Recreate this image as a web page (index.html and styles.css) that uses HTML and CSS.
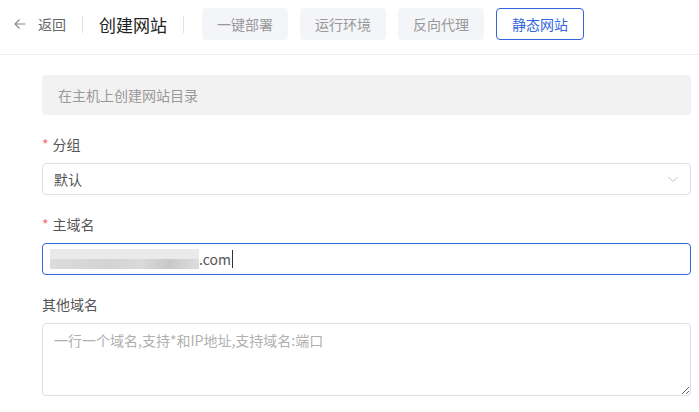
FILE: index.html
```html
<!DOCTYPE html>
<html lang="zh-CN">
<head>
    <meta charset="UTF-8">
    <title>创建网站</title>
    <link rel="stylesheet" href="styles.css">
</head>
<body>

<div class="page-header">
    <a class="back-link">
        <svg width="14" height="14" viewBox="0 0 14 14"><path d="M12.5 7H2M6.5 2.5L2 7l4.5 4.5" fill="none" stroke="#888" stroke-width="1.1"/></svg>
        <span>返回</span>
    </a>
    <span class="divider"></span>
    <h1>创建网站</h1>
    <span class="divider"></span>
    <div class="type-tabs">
        <button>一键部署</button>
        <button>运行环境</button>
        <button>反向代理</button>
        <button class="active">静态网站</button>
    </div>
</div>

<div class="form-body">
    <div class="notice">在主机上创建网站目录</div>

    <div class="form-item">
        <label class="required">分组</label>
        <div class="select-box">
            <span>默认</span>
            <svg width="12" height="12" viewBox="0 0 12 12"><path d="M1.5 4l4.5 4.5L10.5 4" fill="none" stroke="#c0c4cc" stroke-width="1"/></svg>
        </div>
    </div>

    <div class="form-item">
        <label class="required">主域名</label>
        <div class="input-box focused">
            <span class="blurred"></span><span class="domain">.com</span><span class="caret"></span>
        </div>
    </div>

    <div class="form-item">
        <label>其他域名</label>
        <textarea placeholder="一行一个域名,支持*和IP地址,支持域名:端口"></textarea>
    </div>
</div>

</body>
</html>
```

FILE: styles.css
```css
body {
    margin: 0;
    font-family: "Noto Sans CJK SC", "Liberation Sans", sans-serif;
    font-size: 14px;
    color: #333;
    background: #fff;
}

/* Header */
.page-header {
    display: flex;
    align-items: center;
    height: 48px;
    padding: 0 0 6px 13px;
    border-bottom: 1px solid #ececec;
}

.back-link {
    display: flex;
    align-items: center;
    gap: 11px;
    color: #666;
    font-size: 14px;
}

.divider {
    width: 1px;
    height: 17px;
    background: #e2e2e2;
    margin: 0 16px;
}

.page-header h1 {
    margin: 0;
    font-size: 17px;
    font-weight: normal;
    color: #222;
}

.type-tabs {
    display: flex;
    gap: 12px;
    margin-left: 2px;
}

.type-tabs button {
    width: 86px;
    height: 32px;
    border: 1px solid #f4f5f8;
    border-radius: 4px;
    background: #f4f5f8;
    color: #999;
    font-family: inherit;
    font-size: 14px;
    padding: 0;
}

.type-tabs button.active {
    width: 88px;
    background: #fff;
    border-color: #3366dd;
    color: #3366dd;
}

/* Form */
.form-body {
    padding: 20px 8px 0 42px;
}

.notice {
    height: 40px;
    line-height: 40px;
    padding: 0 16px;
    background: #f2f2f2;
    border-radius: 4px;
    color: #999;
    margin-bottom: 18px;
}

.form-item {
    margin-bottom: 18px;
}

.form-item label {
    display: block;
    line-height: 22px;
    margin-bottom: 8px;
    color: #555;
}

.form-item label.required::before {
    content: "*";
    color: #f56c6c;
    margin-right: 4px;
}

.select-box,
.input-box {
    display: flex;
    align-items: center;
    height: 32px;
    padding: 0 11px;
    border: 1px solid #dcdfe6;
    border-radius: 4px;
    box-sizing: border-box;
    color: #555;
}

.select-box {
    justify-content: space-between;
}

.input-box.focused {
    border-color: #3366dd;
    padding-left: 7px;
}

.blurred {
    width: 149px;
    height: 20px;
    background:
        linear-gradient(#eaeaea, #eaeaea) 0 0 / 100% 50% no-repeat,
        linear-gradient(90deg, #dcdcdc, #d3d3d3 40%, #dadada 60%, #c8c8c8 80%, #dedede) 0 100% / 100% 50% no-repeat;
}

.domain {
    color: #555;
}

.caret {
    width: 1px;
    height: 18px;
    background: #333;
    margin-left: 1px;
}

textarea {
    display: block;
    width: 100%;
    height: 73px;
    box-sizing: border-box;
    padding: 5px 11px;
    border: 1px solid #dcdfe6;
    border-radius: 4px;
    font-family: inherit;
    font-size: 14px;
    line-height: 22px;
    color: #555;
}

textarea::placeholder {
    color: #b0b0b0;
}
```
